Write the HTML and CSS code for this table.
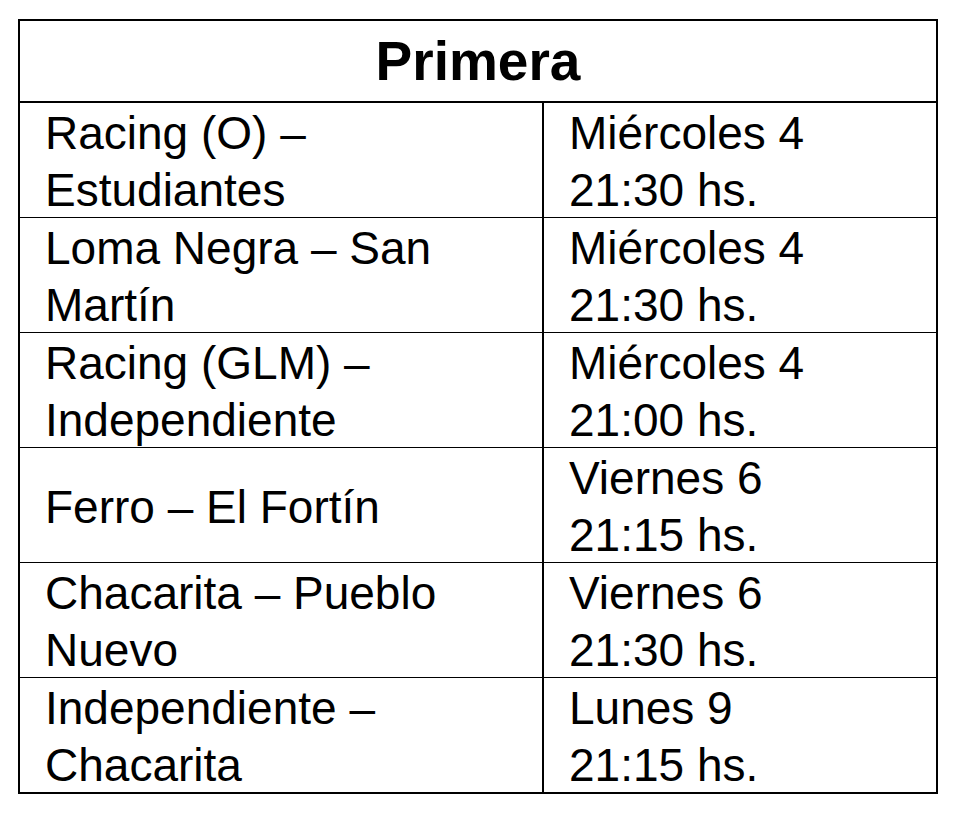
FILE: index.html
```html
<!DOCTYPE html>
<html lang="es">
<head>
<meta charset="utf-8">
<title>Primera</title>
<link rel="stylesheet" href="styles.css">
</head>
<body>
<div class="fixture">
  <div class="title"><span class="title-text">Primera</span></div>
  <div class="row">
    <div class="cell match"><span class="txt">Racing (O) –<br>Estudiantes</span></div>
    <div class="cell when"><span class="txt">Miércoles 4<br>21:30 hs.</span></div>
  </div>
  <div class="row">
    <div class="cell match"><span class="txt">Loma Negra – San<br>Martín</span></div>
    <div class="cell when"><span class="txt">Miércoles 4<br>21:30 hs.</span></div>
  </div>
  <div class="row">
    <div class="cell match"><span class="txt">Racing (GLM) –<br>Independiente</span></div>
    <div class="cell when"><span class="txt">Miércoles 4<br>21:00 hs.</span></div>
  </div>
  <div class="row">
    <div class="cell match"><span class="txt">Ferro – El Fortín</span></div>
    <div class="cell when"><span class="txt">Viernes 6<br>21:15 hs.</span></div>
  </div>
  <div class="row">
    <div class="cell match"><span class="txt">Chacarita – Pueblo<br>Nuevo</span></div>
    <div class="cell when"><span class="txt">Viernes 6<br>21:30 hs.</span></div>
  </div>
  <div class="row">
    <div class="cell match"><span class="txt">Independiente –<br>Chacarita</span></div>
    <div class="cell when"><span class="txt">Lunes 9<br>21:15 hs.</span></div>
  </div>
</div>
</body>
</html>
```

FILE: styles.css
```css
html, body {
  margin: 0;
  padding: 0;
  background: #fff;
}

body {
  padding: 19px 0 0 18px;
  font-family: "Liberation Sans", Arial, sans-serif;
  color: #000;
}

.fixture {
  width: 920px;
  box-sizing: border-box;
  border: 2px solid #000;
}

.title {
  height: 82px;
  box-sizing: border-box;
  border-bottom: 2px solid #000;
  display: flex;
  align-items: center;
  justify-content: center;
}

.title-text {
  font-weight: bold;
  font-size: 55px;
  line-height: 60px;
}

.row {
  display: grid;
  grid-template-columns: 522px 1fr;
  height: 115px;
  box-sizing: border-box;
  border-top: 1px solid #000;
}

.row:nth-child(2) {
  border-top: none;
  height: 114px;
}

.cell {
  display: flex;
  align-items: center;
  padding: 2px 0 0 25px;
  box-sizing: border-box;
  white-space: nowrap;
}

.when {
  border-left: 2px solid #000;
}

.txt {
  font-size: 46px;
  line-height: 57px;
}
```
